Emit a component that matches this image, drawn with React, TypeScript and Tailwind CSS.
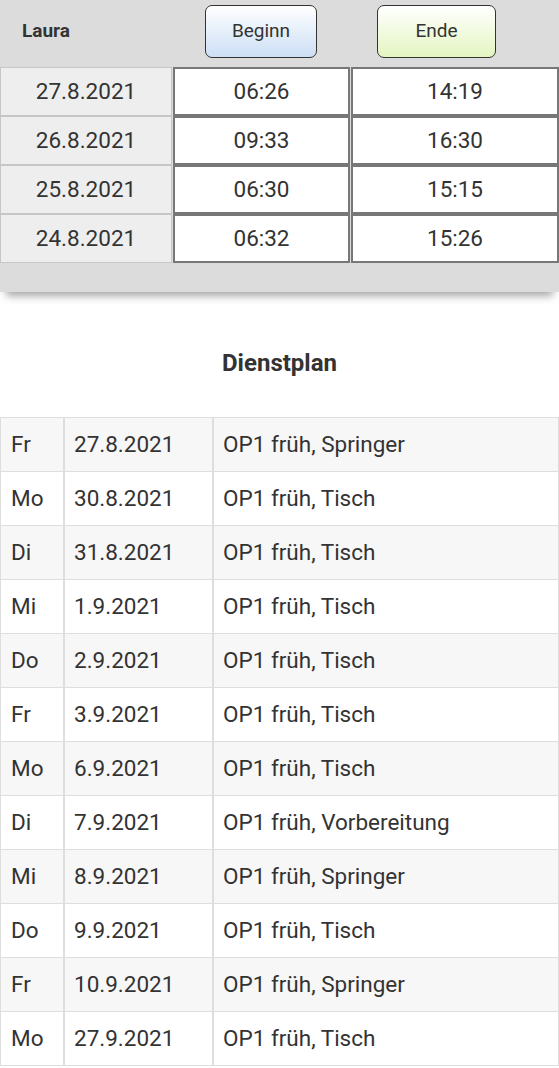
import React from 'react'

const times = [
  { date: '27.8.2021', start: '06:26', end: '14:19' },
  { date: '26.8.2021', start: '09:33', end: '16:30' },
  { date: '25.8.2021', start: '06:30', end: '15:15' },
  { date: '24.8.2021', start: '06:32', end: '15:26' },
]

const plan = [
  ['Fr', '27.8.2021', 'OP1 früh, Springer'],
  ['Mo', '30.8.2021', 'OP1 früh, Tisch'],
  ['Di', '31.8.2021', 'OP1 früh, Tisch'],
  ['Mi', '1.9.2021', 'OP1 früh, Tisch'],
  ['Do', '2.9.2021', 'OP1 früh, Tisch'],
  ['Fr', '3.9.2021', 'OP1 früh, Tisch'],
  ['Mo', '6.9.2021', 'OP1 früh, Tisch'],
  ['Di', '7.9.2021', 'OP1 früh, Vorbereitung'],
  ['Mi', '8.9.2021', 'OP1 früh, Springer'],
  ['Do', '9.9.2021', 'OP1 früh, Tisch'],
  ['Fr', '10.9.2021', 'OP1 früh, Springer'],
  ['Mo', '27.9.2021', 'OP1 früh, Tisch'],
]

export default function App() {
  return (
    <div className="min-h-screen bg-white text-[#333] font-['Roboto',sans-serif]">
      {/* Zeiterfassung */}
      <div className="bg-[#dcdcdc] pb-[29px] shadow-[0_10px_8px_-6px_rgba(0,0,0,0.35)]">
        <div className="flex items-center h-[67px]">
          <div className="w-[205px] pl-[22px] pb-[5px] text-[19px] font-bold">Laura</div>
          <button className="w-[112px] h-[53px] mb-[9px] mt-[5px] rounded-[7px] border border-[#333] bg-gradient-to-b from-white to-[#cddff5] text-[19px] text-[#333]">
            Beginn
          </button>
          <button className="ml-[60px] w-[119px] h-[53px] mb-[9px] mt-[5px] rounded-[7px] border border-[#333] bg-gradient-to-b from-white to-[#e4f5c0] text-[19px] text-[#333]">
            Ende
          </button>
        </div>
        {times.map((t) => (
          <div key={t.date} className="flex h-[49px] text-[22.5px]">
            <div className="w-[172px] flex items-center justify-center bg-[#eeeeee] border border-[#c6c6c6]">
              {t.date}
            </div>
            <div className="ml-[1px] w-[177px] flex items-center justify-center bg-white border-2 border-[#777]">
              {t.start}
            </div>
            <div className="ml-[1px] flex-1 flex items-center justify-center bg-white border-2 border-[#777]">
              {t.end}
            </div>
          </div>
        ))}
      </div>

      {/* Dienstplan */}
      <h2 className="text-center text-[24px] leading-[36px] font-bold pt-[53px] pb-[36px]">Dienstplan</h2>
      <div className="border-t border-l border-[#dedede]">
        {plan.map(([day, date, shift], i) => (
          <div
            key={date}
            className={`flex h-[54px] text-[22.5px] border-b border-[#dedede] ${i % 2 === 0 ? 'bg-[#f7f7f7]' : 'bg-white'}`}
          >
            <div className="w-[64px] flex items-center pl-[10px] border-r-2 border-[#dedede]">{day}</div>
            <div className="w-[149px] flex items-center pl-[9px] border-r-2 border-[#dedede]">{date}</div>
            <div className="flex-1 flex items-center pl-[9px] border-r border-[#dedede]">{shift}</div>
          </div>
        ))}
      </div>
    </div>
  )
}
